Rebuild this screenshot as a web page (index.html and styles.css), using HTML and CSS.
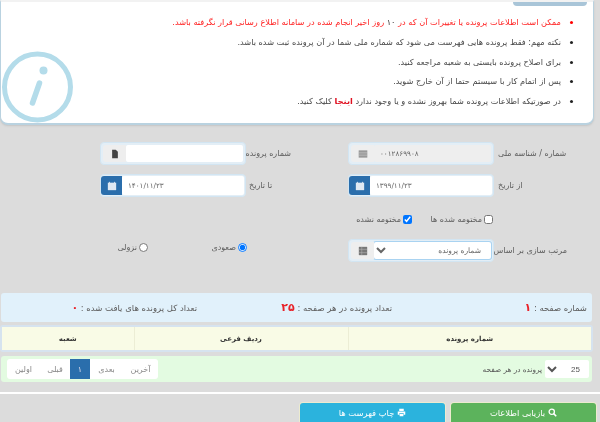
FILE: index.html
```html
<!DOCTYPE html>
<html lang="fa" dir="rtl">
<head>
<meta charset="utf-8">
<title>فهرست پرونده ها</title>
<link rel="stylesheet" href="styles.css">
</head>
<body>
<div class="page">
  <section class="notice">
    <div class="notice-tab"></div>
    <ul class="notes">
      <li class="danger">ممکن است اطلاعات پرونده یا تغییرات آن که در <span class="dark">۱۰</span> روز اخیر انجام شده در سامانه اطلاع رسانی قرار نگرفته باشد.</li>
      <li>نکته مهم: فقط پرونده هایی فهرست می شود که شماره ملی شما در آن پرونده ثبت شده باشد.</li>
      <li>برای اصلاح پرونده بایستی به شعبه مراجعه کنید.</li>
      <li>پس از اتمام کار با سیستم حتما از آن خارج شوید.</li>
      <li>در صورتیکه اطلاعات پرونده شما بهروز نشده و یا وجود ندارد <b class="link">اینجا</b> کلیک کنید.</li>
    </ul>
    <svg class="info-icon" viewBox="0 0 74 74" aria-hidden="true">
      <circle cx="36.500" cy="37" r="33" fill="none" stroke="#b4dcea" stroke-width="5"/>
      <circle cx="42.500" cy="20.500" r="4" fill="#b4dcea"/>
      <path d="M38.500 33 L31.500 53" stroke="#b4dcea" stroke-width="5.500" stroke-linecap="round"/>
    </svg>
  </section>

  <form class="form">
    <div class="row">
      <label class="lbl lbl-a">شماره / شناسه ملی</label>
      <div class="group">
        <input class="ctl ctl-ltr ctl-off" value="۰۰۱۲۸۶۹۹۰۸" readonly>
        <span class="addon"><svg class="ic" viewBox="0 0 14 12"><path d="M1 1h12v10H1z" fill="#8c8c8c"/><path d="M1 3.500h12M1 6h12M1 8.500h12" stroke="#ddd" stroke-width=".8"/></svg></span>
      </div>
      <label class="lbl lbl-b">شماره پرونده</label>
      <div class="group">
        <input class="ctl" value="">
        <span class="addon"><svg class="ic" viewBox="0 0 12 14"><path d="M2 1h5l3 3v9H2z" fill="#444"/></svg></span>
      </div>
    </div>
    <div class="row">
      <label class="lbl lbl-a">از تاریخ</label>
      <div class="group group-date">
        <input class="ctl ctl-ltr" value="۱۳۹۹/۱۱/۲۳">
        <span class="addon addon-blue"><svg class="ic" viewBox="0 0 12 12"><path d="M1 2h10v9H1z" fill="#dfe9f3"/><path d="M3 1v2M9 1v2" stroke="#dfe9f3"/></svg></span>
      </div>
      <label class="lbl lbl-b">تا تاریخ</label>
      <div class="group group-date">
        <input class="ctl ctl-ltr" value="۱۴۰۱/۱۱/۲۳">
        <span class="addon addon-blue"><svg class="ic" viewBox="0 0 12 12"><path d="M1 2h10v9H1z" fill="#dfe9f3"/><path d="M3 1v2M9 1v2" stroke="#dfe9f3"/></svg></span>
      </div>
    </div>
    <div class="checks">
      <label class="chk chk-first"><input type="checkbox"><span>مختومه شده ها</span></label>
      <label class="chk"><input type="checkbox" checked><span>مختومه نشده</span></label>
    </div>
    <div class="row row-sort">
      <label class="lbl lbl-a">مرتب سازی بر اساس</label>
      <div class="group group-focus">
        <select class="ctl ctl-select"><option>شماره پرونده</option></select>
        <span class="addon"><svg class="ic" viewBox="0 0 12 12"><path d="M1 1h10v10H1z" fill="#777"/><path d="M1 4h10M1 8h10M4.500 1v10" stroke="#bbb" stroke-width=".6"/></svg></span>
      </div>
      <div class="radios">
        <label class="rad"><input type="radio" name="o" checked><span>صعودی</span></label>
        <label class="rad"><input type="radio" name="o"><span>نزولی</span></label>
      </div>
    </div>
  </form>

  <div class="stats">
    <span class="stat stat-page">شماره صفحه : <b class="num">۱</b></span>
    <span class="stat stat-size">تعداد پرونده در هر صفحه : <b class="num">۲۵</b></span>
    <span class="stat stat-total">تعداد کل پرونده های یافت شده : <b class="num">۰</b></span>
  </div>

  <div class="table-wrap">
    <table class="table">
      <thead><tr>
        <th class="c1">شماره پرونده</th>
        <th class="c2">ردیف فرعی</th>
        <th>شعبه</th>
      </tr></thead>
    </table>
  </div>

  <div class="pager-bar">
    <select class="size" dir="rtl"><option>25</option></select>
    <span class="size-lbl">پرونده در هر صفحه</span>
    <nav class="pager">
      <a>آخرین</a><a>بعدی</a><a class="on">۱</a><a>قبلی</a><a>اولین</a>
    </nav>
  </div>

  <hr class="rule">

  <div class="actions">
    <button type="button" class="btn btn-green"><svg class="bi" viewBox="0 0 12 12"><circle cx="5" cy="5" r="3.500" fill="none" stroke="#fff" stroke-width="1.800"/><path d="M7.500 7.500L11 11" stroke="#fff" stroke-width="2"/></svg>بازیابی اطلاعات</button>
    <button type="button" class="btn btn-blue"><svg class="bi" viewBox="0 0 12 12"><path d="M3 1h6v3H3zM1 4.500h10v4.500H9V7H3v2H1zM3.500 8h5v3h-5z" fill="#fff"/></svg>چاپ فهرست ها</button>
  </div>
</div>
</body>
</html>
```

FILE: styles.css
```css
* { box-sizing: border-box; }
html, body { margin: 0; height: 100%; }
body {
  background: #dcdcdc;
  font-family: "DejaVu Sans", sans-serif;
  font-size: 8px;
  color: #555;
  overflow: hidden;
}
.page { width: 600px; height: 422px; overflow: hidden; filter: blur(.5px); }

.notice {
  position: relative;
  height: 125px;
  margin-right: 6px;
  background: #fff;
  border: 1px solid #b9d2e0;
  border-top: 2px solid #f2f2f2;
  border-bottom-width: 2px;
  border-radius: 0 0 8px 8px;
  box-shadow: 0 1px 2px #c4c4c4;
  overflow: hidden;
}
.notice-tab {
  position: absolute;
  top: -2px;
  right: 6px;
  width: 74px;
  height: 6px;
  background: #a9c5d8;
  border-radius: 0 0 4px 4px;
}
.notes {
  margin: 0;
  padding: 14px 32px 0 0;
  list-style: disc;
  color: #484848;
}
.notes li { height: 19.800px; font-size: 8.200px; line-height: 13px; white-space: nowrap; }
.notes li::marker { color: #222; }
.notes .danger { color: #f22; }
.notes .danger::marker { color: #f00; }
.dark { color: #333; }
.link { color: #e01020; }
.info-icon {
  position: absolute;
  left: 0;
  top: 48px;
  width: 74px;
  height: 74px;
}

.form { padding: 17px 0 0; }
.row {
  display: flex;
  align-items: center;
  height: 23px;
  padding-right: 33px;
  margin-bottom: 9px;
}
.lbl { flex: none; color: #5c5c5c; white-space: nowrap; text-align: left; }
.lbl-a { width: 73px; padding-left: 4px; }
.lbl-b { width: 45px; margin-right: 57px; padding-left: 3px; }
.group {
  flex: none;
  display: flex;
  width: 146px;
  height: 23px;
  padding: 2px;
  background: #e3eef6;
  border: 1px solid #d2e5f2;
  border-radius: 4px;
}
.group-date { padding: 1px 1px 1px 0; }
.group-focus .ctl { box-shadow: 0 0 0 1px #a9d3f1; }
.ctl {
  flex: 1;
  min-width: 0;
  height: 100%;
  border: 0;
  border-radius: 2px;
  background: #fff;
  font: 7.200px "DejaVu Sans", sans-serif;
  color: #666;
  padding: 0 6px;
  outline: none;
}
.ctl-ltr { direction: ltr; text-align: left; }
.ctl-off { background: #eee; }
.ctl-select { padding: 0 6px 0 0; font-size: 7.500px; }
.addon {
  flex: none;
  display: flex;
  align-items: center;
  justify-content: center;
  width: 23px;
  background: #eee;
  border-radius: 3px 0 0 3px;
}
.addon-blue { width: 21px; background: #2a6eac; }
.ic { width: 10px; height: 10px; }

.checks {
  display: flex;
  align-items: center;
  height: 23px;
  margin: 11px 0 8px;
  padding-right: 107px;
}
.chk { display: flex; align-items: center; gap: 2px; color: #5c5c5c; white-space: nowrap; }
.chk-first { width: 81px; }
.chk input { margin: 0; width: 9px; height: 9px; }

.row-sort { margin-bottom: 0; }
.radios {
  display: flex;
  align-items: flex-start;
  height: 23px;
  padding: 4px 0 0;
  margin-right: 101px;
}
.rad { display: flex; align-items: center; gap: 2px; color: #5c5c5c; white-space: nowrap; }
.rad:first-child { width: 99px; }
.rad input { margin: 0; width: 9px; height: 9px; }

.stats {
  display: flex;
  align-items: center;
  height: 29px;
  margin: 31px 8px 0 1px;
  padding: 0 5px;
  background: #e1f1fb;
  border-radius: 3px;
  font-size: 8.500px;
  color: #5c5c5c;
  white-space: nowrap;
}
.num { color: #e8232a; font-size: 11px; }
.stat-page, .stat-size { width: 195px; }

.table-wrap {
  height: 27px;
  margin: 3px 7px 0 0;
  padding: 2px;
  background: #d6e3ef;
  border-radius: 3px;
}
.table { width: 100%; height: 100%; border-collapse: collapse; background: #f9fbe6; table-layout: fixed; }
.table th { font-weight: 700; font-size: 7px; color: #333; padding: 0; border-left: 1px solid #ecedd5; }
.table th:last-child { border-left: 0; }
.c1 { width: 243px; }
.c2 { width: 214px; }

.pager-bar {
  display: flex;
  align-items: center;
  height: 26px;
  margin: 4px 8px 0 1px;
  padding: 0 3px 0 6px;
  background: #e3fbe1;
  border-radius: 3px;
}
.size {
  flex: none;
  width: 44px;
  height: 18px;
  border: 0;
  background: #fff;
  font: 8px "Liberation Sans", sans-serif;
  color: #555;
  border-radius: 2px;
  padding: 0 5px 0 0;
}
.size-lbl { margin-right: 3px; font-size: 7.300px; color: #555; white-space: nowrap; }
.pager { display: flex; height: 20px; margin-right: auto; background: #fff; border-radius: 3px; font-size: 8px; color: #888; }
.pager a { display: flex; align-items: center; justify-content: center; width: 33px; }
.pager a:nth-child(1) { width: 35px; }
.pager a:nth-child(3) { width: 20px; }
.pager a:nth-child(4) { width: 30px; }
.pager a.on { background: #2a6eac; color: #dde; }

.rule { height: 2px; margin: 10px 0 0; border: 0; background: #fff; }

.actions { display: flex; gap: 6px; padding: 9px 4px 0 0; }
.btn {
  display: flex;
  align-items: center;
  justify-content: center;
  gap: 3px;
  width: 145px;
  height: 24px;
  padding: 0 0 5px;
  border: 0;
  border-radius: 3px 3px 0 0;
  color: #fff;
  font: 8.400px "DejaVu Sans", sans-serif;
}
.btn-green { background: #5cb35c; box-shadow: 0 0 0 1px #ecebcf; }
.btn-blue { background: #2bb3dd; box-shadow: 0 0 0 1px #ecebcf; }
.bi { width: 9px; height: 9px; }
```
